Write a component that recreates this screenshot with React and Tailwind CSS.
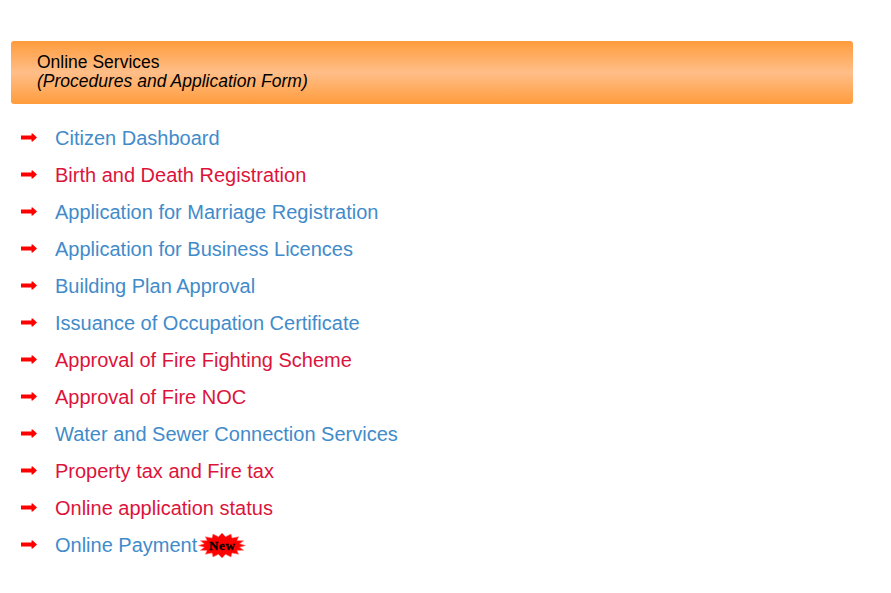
const items = [
  ["Citizen Dashboard", "b"],
  ["Birth and Death Registration", "r"],
  ["Application for Marriage Registration", "b"],
  ["Application for Business Licences", "b"],
  ["Building Plan Approval", "b"],
  ["Issuance of Occupation Certificate", "b"],
  ["Approval of Fire Fighting Scheme", "r"],
  ["Approval of Fire NOC", "r"],
  ["Water and Sewer Connection Services", "b"],
  ["Property tax and Fire tax", "r"],
  ["Online application status", "r"],
  ["Online Payment", "b", true],
];

function Arrow() {
  return (
    <svg width="17" height="9" viewBox="0 0 17 9" className="shrink-0 mb-[3px]">
      <path d="M1 2.5h10.5V0.6h1.2L17 4.5 12.7 8.4h-1.2V6.5H1z" fill="#ff0000" />
    </svg>
  );
}

function Burst() {
  const pts = [];
  const n = 16, cx = 24, cy = 12.5;
  for (let i = 0; i < n * 2; i++) {
    const a = (i * Math.PI) / n;
    const big = i % 2 === 0;
    const rx = big ? 23.5 : 18;
    const ry = big ? 12.5 : 9;
    pts.push(`${(cx + rx * Math.cos(a)).toFixed(1)},${(cy + ry * Math.sin(a)).toFixed(1)}`);
  }
  return (
    <span className="relative inline-block w-[48px] h-[25px] ml-px -mt-px">
      <svg width="48" height="25" viewBox="0 0 48 25" className="block">
        <polygon points={pts.join(" ")} fill="#ff0000" stroke="#ff8080" strokeWidth="0.6" />
      </svg>
      <span className="absolute inset-0 flex items-center justify-center text-[13px] leading-none tracking-[0.7px] font-bold text-black [-webkit-text-stroke:0.3px_black] font-['Liberation_Serif',serif]">
        New
      </span>
    </span>
  );
}

export default function App() {
  return (
    <div className="w-[891px] h-[593px] bg-white pt-[41px] pl-[11px] font-['Liberation_Sans',Arial,sans-serif]">
      <div className="w-[842px] h-[63px] rounded-[3px] pl-[26px] pt-[12px] text-[17.5px] leading-[19px] text-black bg-[linear-gradient(to_bottom,#ff9c3c_0%,#ffbe88_50%,#ff9c3c_100%)]">
        <div>Online Services</div>
        <div className="italic">(Procedures and Application Form)</div>
      </div>
      <ul className="mt-[16px] pl-[9px]">
        {items.map(([label, c, isNew]) => (
          <li key={label} className="flex items-center h-[37px]">
            <Arrow />
            <a className={`ml-[18px] text-[20px] leading-[37px] whitespace-nowrap ${c === "b" ? "text-[#428bca]" : "text-[#dc143c]"}`}>
              {label}
            </a>
            {isNew && <Burst />}
          </li>
        ))}
      </ul>
    </div>
  );
}
